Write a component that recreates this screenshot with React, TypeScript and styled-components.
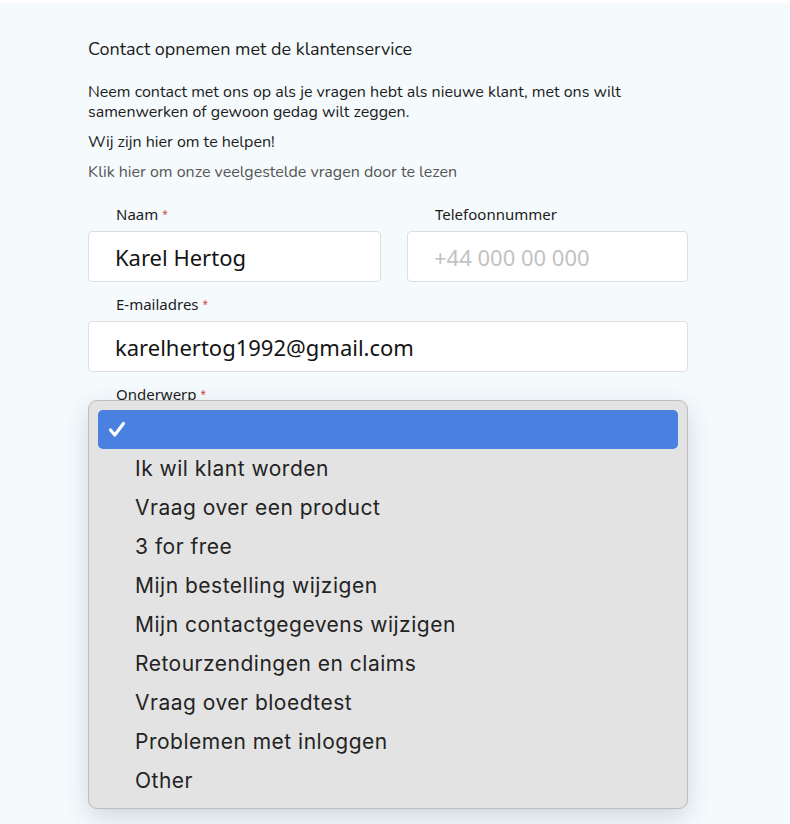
import styled, { createGlobalStyle } from "styled-components";

const GlobalStyle = createGlobalStyle`
  html, body {
    margin: 0;
    padding: 0;
    background: #ffffff;
  }
  body {
    font-family: "Nunito", "Open Sans", "Noto Sans", sans-serif;
    color: #1a1a1a;
  }
`;

//Page
const Page = styled.main`
  margin-top: 3px;
  min-height: 821px;
  background: #f5fafd;
  box-sizing: border-box;
  padding: 33px 0 0 88px;
`;

const Form = styled.div`
  width: 600px;
  display: flex;
  flex-direction: column;
`;

const Title = styled.h1`
  margin: 0 0 20px;
  font-size: 18px;
  font-weight: 400;
  line-height: 26px;
  color: #1c1c1c;
`;

const Text = styled.p<{ $muted?: boolean }>`
  margin: 0 0 10px;
  padding-right: 60px;
  font-size: 16px;
  line-height: 20px;
  color: ${(p) => (p.$muted ? "#565656" : "#1c1c1c")};
`;

//Fields
const Row = styled.div`
  display: grid;
  grid-template-columns: 293px 281px;
  column-gap: 26px;
`;

const Field = styled.div`
  position: relative;
  margin-top: 12px;
  display: flex;
  flex-direction: column;
`;

const Label = styled.label`
  padding-left: 28px;
  font-family: "Noto Sans", sans-serif;
  font-size: 15px;
  line-height: 20px;
  color: #1c1c1c;
  margin-bottom: 7px;
`;

const Star = styled.span`
  color: #d0463f;
  font-size: 10px;
  vertical-align: top;
  margin-left: 4px;
`;

const Input = styled.div<{ $placeholder?: boolean }>`
  height: 51px;
  box-sizing: border-box;
  padding: 0 26px;
  display: flex;
  align-items: center;
  background: #fff;
  border: 1px solid #dcdfe2;
  border-radius: 4px;
  font-family: "Noto Sans", sans-serif;
  font-size: 22px;
  color: ${(p) => (p.$placeholder ? "#c2c2c2" : "#141414")};
`;

//Native-looking select popup
const Menu = styled.ul`
  position: absolute;
  top: 16px;
  left: 0;
  right: 0;
  margin: 0;
  padding: 9px 9px 8px;
  list-style: none;
  background: #e3e3e3;
  border: 1px solid #bdbdbd;
  border-radius: 9px;
  box-shadow: 0 8px 24px rgba(40, 60, 80, 0.18);
  font-family: "Inter", "Liberation Sans", sans-serif;
`;

const Option = styled.li<{ $active?: boolean }>`
  height: 39px;
  display: flex;
  align-items: center;
  padding-left: 37px;
  position: relative;
  border-radius: 5px;
  font-size: 21px;
  letter-spacing: 0.5px;
  color: ${(p) => (p.$active ? "#fff" : "#232323")};
  background: ${(p) => (p.$active ? "#4a80e0" : "transparent")};
`;

const Check = styled.svg`
  position: absolute;
  left: 10px;
  top: 11px;
`;

const options = [
  "Ik wil klant worden",
  "Vraag over een product",
  "3 for free",
  "Mijn bestelling wijzigen",
  "Mijn contactgegevens wijzigen",
  "Retourzendingen en claims",
  "Vraag over bloedtest",
  "Problemen met inloggen",
  "Other",
];

const App = () => {
  return (
    <>
      <GlobalStyle />
      <Page>
        <Form>
          <Title>Contact opnemen met de klantenservice</Title>
          <Text>
            Neem contact met ons op als je vragen hebt als nieuwe klant, met ons wilt
            samenwerken of gewoon gedag wilt zeggen.
          </Text>
          <Text>Wij zijn hier om te helpen!</Text>
          <Text $muted>Klik hier om onze veelgestelde vragen door te lezen</Text>

          <Row>
            <Field>
              <Label>
                Naam<Star>*</Star>
              </Label>
              <Input>Karel Hertog</Input>
            </Field>
            <Field>
              <Label>Telefoonnummer</Label>
              <Input $placeholder>+44 000 00 000</Input>
            </Field>
          </Row>

          <Field>
            <Label>
              E-mailadres<Star>*</Star>
            </Label>
            <Input>karelhertog1992@gmail.com</Input>
          </Field>

          <Field>
            <Label>
              Onderwerp<Star>*</Star>
            </Label>
            <Menu>
              <Option $active>
                <Check width="18" height="17" viewBox="0 0 18 17">
                  <path
                    d="M2.5 9 L6.8 14 L15.5 2.5"
                    fill="none"
                    stroke="#fff"
                    strokeWidth="3.2"
                    strokeLinecap="round"
                    strokeLinejoin="round"
                  />
                </Check>
              </Option>
              {options.map((o) => (
                <Option key={o}>{o}</Option>
              ))}
            </Menu>
          </Field>
        </Form>
      </Page>
    </>
  );
};

export default App;
